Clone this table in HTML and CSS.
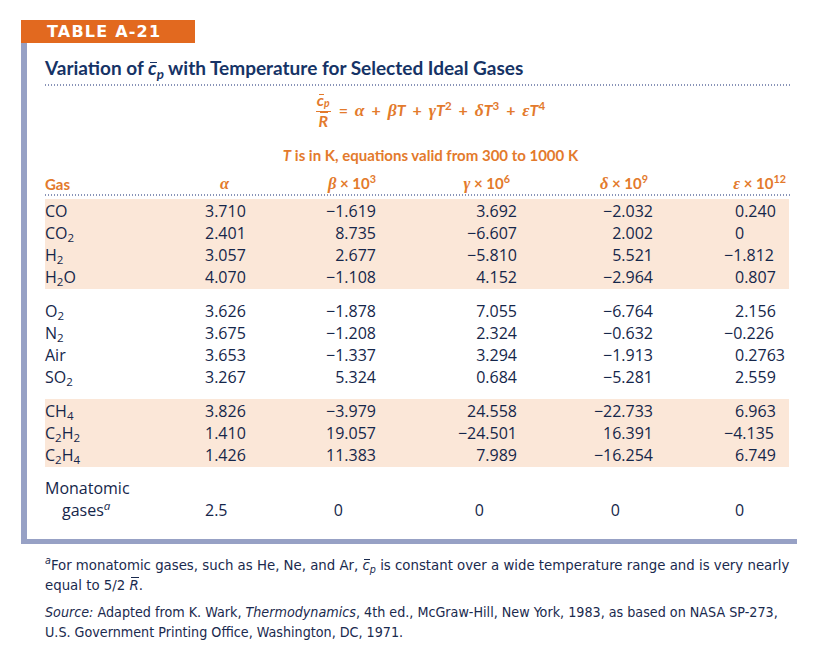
FILE: index.html
```html
<!DOCTYPE html>
<html>
<head>
<meta charset="utf-8">
<link rel="stylesheet" href="styles.css">
</head>
<body>
<div class="page">
  <div class="tab">TABLE A-21</div>
  <div class="box">
    <h1 class="title">Variation of <span class="it bar-x">c</span><sub class="it">p</sub> with Temperature for Selected Ideal Gases</h1>
    <div class="dots"></div>
    <div class="formula">
      <span class="frac">
        <span class="num"><span class="it bar-x">c</span><sub class="it">p</sub></span>
        <span class="den"><span class="it bar-cap">R</span></span>
      </span>
      <span class="rhs">= <i class="g">α</i> + <i class="g">β</i><i class="t">T</i> + <i class="g">γ</i><i class="t">T</i><sup>2</sup> + <i class="g">δ</i><i class="t">T</i><sup>3</sup> + <i class="g">ε</i><i class="t">T</i><sup>4</sup></span>
    </div>
    <div class="note"><i class="t">T</i> is in K, equations valid from 300 to 1000 K</div>
    <div class="row head">
      <span class="c-gas">Gas</span>
      <span class="c-a"><i class="g">α</i></span>
      <span class="c-b"><i class="g">β</i> × 10<sup>3</sup></span>
      <span class="c-c"><i class="g">γ</i> × 10<sup>6</sup></span>
      <span class="c-d"><i class="g">δ</i> × 10<sup>9</sup></span>
      <span class="c-e"><i class="g">ε</i> × 10<sup>12</sup></span>
    </div>
    <div class="dots"></div>

    <div class="group shaded first">
      <div class="row"><span class="c-gas">CO</span><span class="c-a">3.710</span><span class="c-b">−1.619</span><span class="c-c">3.692</span><span class="c-d">−2.032</span><span class="c-e">0.240</span></div>
      <div class="row"><span class="c-gas">CO<sub>2</sub></span><span class="c-a">2.401</span><span class="c-b">8.735</span><span class="c-c">−6.607</span><span class="c-d">2.002</span><span class="c-e">0</span></div>
      <div class="row"><span class="c-gas">H<sub>2</sub></span><span class="c-a">3.057</span><span class="c-b">2.677</span><span class="c-c">−5.810</span><span class="c-d">5.521</span><span class="c-e"><span class="neg">−1.812</span></span></div>
      <div class="row"><span class="c-gas">H<sub>2</sub>O</span><span class="c-a">4.070</span><span class="c-b">−1.108</span><span class="c-c">4.152</span><span class="c-d">−2.964</span><span class="c-e">0.807</span></div>
    </div>

    <div class="group">
      <div class="row"><span class="c-gas">O<sub>2</sub></span><span class="c-a">3.626</span><span class="c-b">−1.878</span><span class="c-c">7.055</span><span class="c-d">−6.764</span><span class="c-e">2.156</span></div>
      <div class="row"><span class="c-gas">N<sub>2</sub></span><span class="c-a">3.675</span><span class="c-b">−1.208</span><span class="c-c">2.324</span><span class="c-d">−0.632</span><span class="c-e"><span class="neg">−0.226</span></span></div>
      <div class="row"><span class="c-gas">Air</span><span class="c-a">3.653</span><span class="c-b">−1.337</span><span class="c-c">3.294</span><span class="c-d">−1.913</span><span class="c-e">0.2763</span></div>
      <div class="row"><span class="c-gas">SO<sub>2</sub></span><span class="c-a">3.267</span><span class="c-b">5.324</span><span class="c-c">0.684</span><span class="c-d">−5.281</span><span class="c-e">2.559</span></div>
    </div>

    <div class="group shaded">
      <div class="row"><span class="c-gas">CH<sub>4</sub></span><span class="c-a">3.826</span><span class="c-b">−3.979</span><span class="c-c">24.558</span><span class="c-d">−22.733</span><span class="c-e">6.963</span></div>
      <div class="row"><span class="c-gas">C<sub>2</sub>H<sub>2</sub></span><span class="c-a">1.410</span><span class="c-b">19.057</span><span class="c-c">−24.501</span><span class="c-d">16.391</span><span class="c-e"><span class="neg">−4.135</span></span></div>
      <div class="row"><span class="c-gas">C<sub>2</sub>H<sub>4</sub></span><span class="c-a">1.426</span><span class="c-b">11.383</span><span class="c-c">7.989</span><span class="c-d">−16.254</span><span class="c-e">6.749</span></div>
    </div>

    <div class="row mono">
      <span class="c-gas">Monatomic<br><span class="indent">gases<sup class="it">a</sup></span></span>
      <span class="c-a">2.5</span><span class="c-b">0</span><span class="c-c">0</span><span class="c-d">0</span><span class="c-e">0</span>
    </div>
  </div>

  <div class="foot">
    <p class="fn"><sup class="it">a</sup>For monatomic gases, such as He, Ne, and Ar, <span class="it nbar-x">c</span><sub class="it">p</sub> is constant over a wide temperature range and is very nearly<br>equal to 5/2 <span class="it nbar-cap">R</span>.</p>
    <p class="src"><i>Source:</i> Adapted from K. Wark, <i>Thermodynamics</i>, 4th ed., McGraw-Hill, New York, 1983, as based on NASA SP-273,<br>U.S. Government Printing Office, Washington, DC, 1971.</p>
  </div>
</div>
</body>
</html>
```

FILE: styles.css
```css
html, body {
  margin: 0;
  padding: 0;
  background: #ffffff;
}

.page {
  padding: 20px 0 0 21px;
  width: 776px;
  font-family: Lato, "Open Sans", sans-serif;
  color: #1a2a4e;
}

.tab {
  width: 174px;
  height: 23px;
  box-sizing: border-box;
  padding-left: 26px;
  background: #e2691f;
  color: #ffffff;
  font-family: "DejaVu Sans", sans-serif;
  font-weight: bold;
  font-size: 16px;
  line-height: 23px;
  letter-spacing: 1.2px;
}

.box {
  box-sizing: border-box;
  width: 776px;
  border-left: 6px solid #97a1c5;
  border-bottom: 5px solid #97a1c5;
  padding: 13px 7px 18px 18px;
}

.it { font-style: italic; }

/* overbars */
.bar-x, .bar-cap, .nbar-x, .nbar-cap { position: relative; }
.bar-x::after, .bar-cap::after, .nbar-x::after, .nbar-cap::after {
  content: "";
  position: absolute;
  left: 0.12em;
  right: -0.02em;
  border-top: 1.3px solid currentColor;
}
.bar-x::after { top: 0.3em; }
.bar-cap::after { top: 0.12em; left: 0.1em; }
.nbar-x::after { top: 0.2em; }
.nbar-cap::after { top: 0.04em; }

sub, sup {
  line-height: 0;
  font-size: 0.72em;
}
sub { vertical-align: -2.5px; }

.title {
  margin: 0;
  font-size: 19px;
  line-height: 24px;
  font-weight: bold;
  color: #163366;
}
.title sub { font-size: 0.7em; vertical-align: -4px; }

.dots {
  height: 2px;
  margin-top: 4px;
  background-image: linear-gradient(to right, #8994b8 1.4px, transparent 1.4px);
  background-size: 3px 2px;
  background-repeat: repeat-x;
}

.formula {
  margin-top: 6px;
  height: 36px;
  display: flex;
  align-items: center;
  justify-content: center;
  padding-left: 26px;
  color: #e37a2c;
  font-weight: bold;
  font-size: 16px;
}

.frac {
  display: inline-flex;
  flex-direction: column;
  align-items: center;
  margin-right: 8px;
}
.num {
  font-size: 16px;
  line-height: 17px;
  padding: 0 1px 3px;
  border-bottom: 1.5px solid #e37a2c;
}
.num sub { vertical-align: -1px; font-size: 0.65em; }
.den {
  font-size: 16px;
  line-height: 18px;
}

.rhs { word-spacing: 3px; }

.g {
  font-family: "Liberation Serif", serif;
  font-style: italic;
  font-weight: bold;
  font-size: 1.1em;
}
.t { font-style: italic; }

.note {
  margin-top: 17px;
  padding-left: 26px;
  text-align: center;
  color: #e37a2c;
  font-weight: bold;
  font-size: 15px;
  line-height: 20px;
}

.row {
  display: grid;
  grid-template-columns: 160px 70px 101px 141px 136px 1fr;
  height: 22px;
  line-height: 22px;
  font-family: "Open Sans", sans-serif;
  font-size: 16px;
  align-items: end;
  color: #15264a;
}

.c-gas { text-align: left; }
.c-a { text-align: left; }
.c-b, .c-c, .c-d { text-align: right; }
.c-e { text-align: left; padding-left: 82px; }

.neg { margin-left: -11px; }

.head {
  margin-top: 7px;
  color: #e37a2c;
  font-family: Lato, sans-serif;
  font-weight: bold;
  font-size: 15px;
}
.head .c-a { padding-left: 15px; }
.head .c-b { padding-right: 0; }
.head .c-c { padding-right: 7px; }
.head .c-d { padding-right: 5px; }
.head .c-e { text-align: right; padding-left: 0; padding-right: 4px; }
.head + .dots { margin-top: 0; }

.group { margin-top: 11px; }
.group.first { margin-top: 3px; }
.shaded {
  background: #fbe7d8;
  padding: 1px 0;
  margin-right: 1px;
}

.mono {
  margin-top: 10px;
  height: 44px;
}
.mono .c-gas { line-height: 22px; }
.mono .c-b, .mono .c-c, .mono .c-d { padding-right: 33px; }
.indent { padding-left: 17px; }

.foot {
  margin-top: 11px;
  padding-left: 24px;
  width: 745px;
  font-family: "Liberation Sans Narrow", "DejaVu Sans Condensed", sans-serif;
  font-stretch: condensed;
  line-height: 20px;
  color: #1a2a4e;
}
.foot p { margin: 0; white-space: nowrap; }
.foot .fn { font-size: 14.8px; }
.foot .src { font-size: 14.2px; margin-top: 7px; }
```
